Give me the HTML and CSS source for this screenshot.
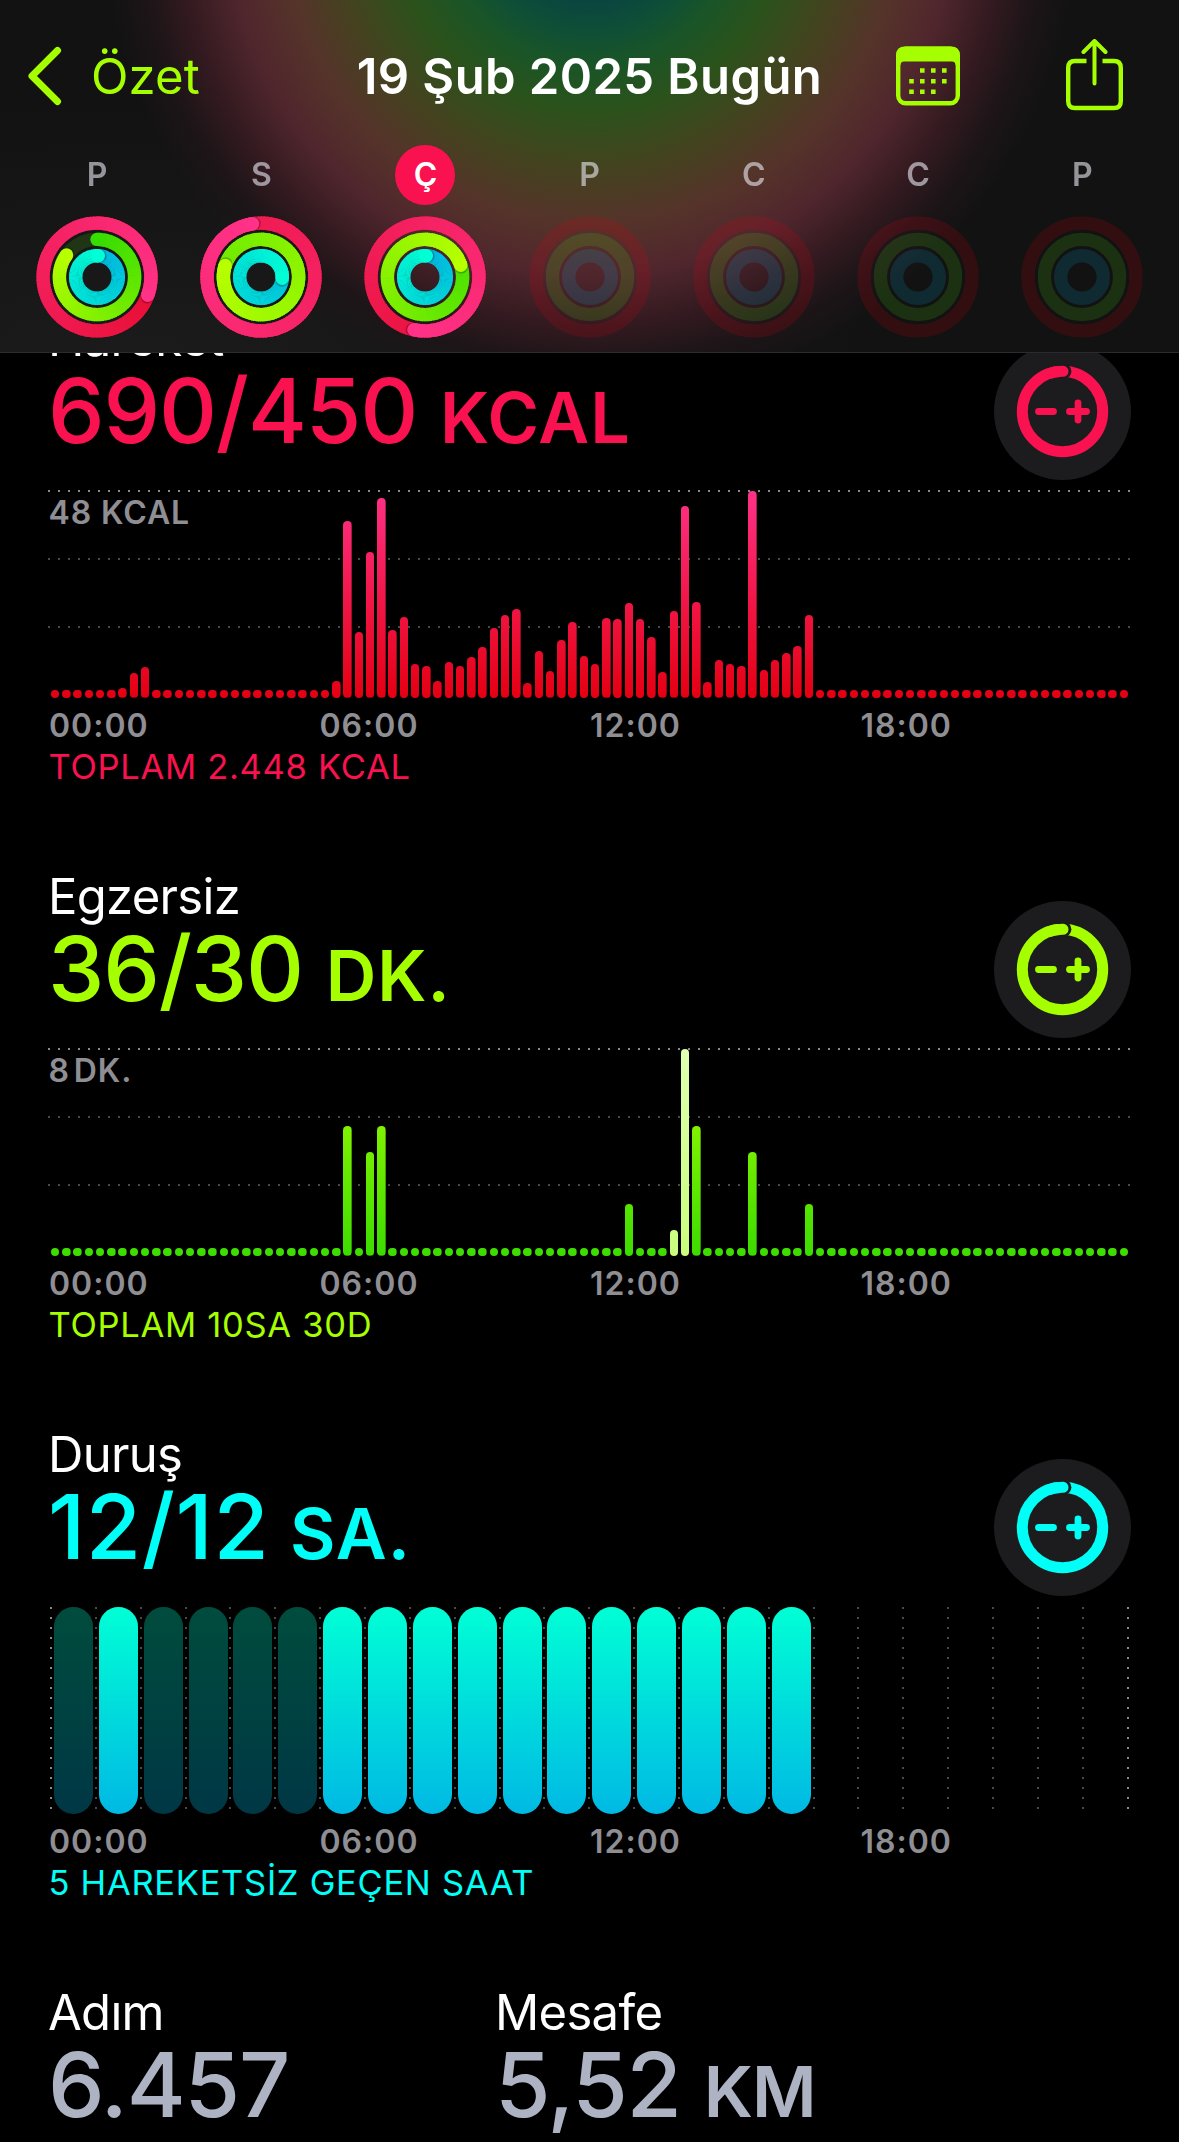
FILE: index.html
```html
<!DOCTYPE html>
<html lang="tr">
<head>
    <meta charset="UTF-8">
    <meta name="viewport" content="width=device-width, initial-scale=1.0">
    <title>Özet</title>
    <link rel="stylesheet" href="styles.css">
</head>
<body>
    <header class="header">
        <nav class="nav">
            <a class="back">
                <svg width="34" height="60" viewBox="0 0 34 60">
                    <path d="M29.5 4.5 L4 30 L29.5 55.5" />
                </svg>
                <span>Özet</span>
            </a>
            <h1 class="title">19 Şub 2025 Bugün</h1>
            <div class="actions">
                <svg class="calendar" width="64" height="60" viewBox="0 0 64 60">
                    <rect x="2.2" y="2.7" width="59.6" height="54.6" rx="7.5" fill="none" stroke="#a6ff00" stroke-width="4.4" />
                    <path d="M0 17 V9.500 Q0 .5 9 .5 H55 Q64 .5 64 9.500 V17 L59.500 19 Q59.500 15.500 56 15.500 H8 Q4.500 15.500 4.500 19 Z" />
                    <g class="calendar-dots">
                        <path d="M24 22.200h4.600v4.600h-4.600zM35 22.200h4.600v4.600h-4.600zM46 22.200h4.600v4.600h-4.600z" />
                        <path d="M13.200 32.900h4.600v4.600h-4.600zM24 32.900h4.600v4.600h-4.600zM35 32.900h4.600v4.600h-4.600zM46 32.900h4.600v4.600h-4.600z" />
                        <path d="M13.200 43.500h4.600v4.600h-4.600zM24 43.500h4.600v4.600h-4.600zM35 43.500h4.600v4.600h-4.600z" />
                    </g>
                </svg>
                <svg class="share" width="57" height="74" viewBox="0 0 57 74">
                    <path d="M20.500 22 H9 Q2.200 22 2.200 28.800 V62.200 Q2.200 69 9 69 H48 Q54.800 69 54.800 62.200 V28.800 Q54.800 22 48 22 H36.500" />
                    <path class="arrow" d="M28.500 44.500 V2.500 M17.500 13 L28.500 2 L39.500 13" />
                </svg>
            </div>
        </nav>
        <div class="week" id="week"></div>
    </header>

    <main>
        <section class="metric move">
            <div class="metric-head">
                <div>
                    <h2>Hareket</h2>
                    <p class="value">690/450 <small>KCAL</small></p>
                </div>
                <button class="goal-btn"></button>
            </div>
            <div class="chart" id="moveChart"><span class="max">48 KCAL</span></div>
            <div class="axis"><span>00:00</span><span>06:00</span><span>12:00</span><span>18:00</span></div>
            <p class="total">TOPLAM 2.448 KCAL</p>
        </section>

        <section class="metric exercise">
            <div class="metric-head">
                <div>
                    <h2>Egzersiz</h2>
                    <p class="value">36/30 <small>DK.</small></p>
                </div>
                <button class="goal-btn"></button>
            </div>
            <div class="chart" id="exerciseChart"><span class="max max-tight">8 DK.</span></div>
            <div class="axis"><span>00:00</span><span>06:00</span><span>12:00</span><span>18:00</span></div>
            <p class="total">TOPLAM 10SA 30D</p>
        </section>

        <section class="metric stand">
            <div class="metric-head">
                <div>
                    <h2>Duruş</h2>
                    <p class="value">12/12 <small>SA.</small></p>
                </div>
                <button class="goal-btn"></button>
            </div>
            <div class="hours" id="standChart"></div>
            <div class="axis"><span>00:00</span><span>06:00</span><span>12:00</span><span>18:00</span></div>
            <p class="total">5 HAREKETSİZ GEÇEN SAAT</p>
        </section>

        <section class="metric summary">
            <div>
                <h2>Adım</h2>
                <p class="value">6.457</p>
            </div>
            <div>
                <h2>Mesafe</h2>
                <p class="value">5,52 <small>KM</small></p>
            </div>
        </section>
    </main>

    <script src="script.js"></script>
</body>
</html>
```
FILE: styles.css
```css
* {
    box-sizing: border-box;
}

body {
    margin: 0;
    background-color: #000;
    color: #fff;
    font-family: Inter, "Liberation Sans", sans-serif;
    overflow: hidden;
}

h1, h2, p {
    margin: 0;
    font-weight: 400;
}

/* Header */
.header {
    position: fixed;
    top: 0;
    left: 0;
    z-index: 2;
    width: 100%;
    height: 353px;
    border-bottom: 1px solid #2b2b2d;
    background:
        radial-gradient(circle at 590px -87px,
            #0a463f 90px, #0f4f36 120px, #195528 150px, #2b521b 197px,
            #44431f 255px, #55332a 310px, #50262d 362px, #331a20 412px,
            #1d1518 450px, rgba(19, 19, 19, 0) 490px),
        radial-gradient(ellipse at 12% 100%, #1b1b1b, #121212 50%);
}

.nav {
    display: grid;
    grid-template-columns: 1fr auto 1fr;
    align-items: center;
    height: 145px;
    padding: 7px 28px 0;
}

.back {
    display: flex;
    align-items: center;
    gap: 29px;
    color: #a6ff00;
    font-size: 49px;
    letter-spacing: 0.1px;
}

.back path {
    fill: none;
    stroke: #a6ff00;
    stroke-width: 7;
    stroke-linecap: round;
    stroke-linejoin: round;
}

.title {
    font-size: 49px;
    font-weight: 600;
    letter-spacing: 0.4px;
    white-space: nowrap;
}

.actions {
    display: flex;
    justify-content: flex-end;
    align-items: center;
    gap: 106px;
    padding-right: 28px;
}

.calendar path {
    fill: #a6ff00;
}

.share path {
    fill: none;
    stroke: #a6ff00;
    stroke-width: 4.4;
    stroke-linecap: butt;
}

.share .arrow {
    stroke-width: 4;
    stroke-linecap: round;
    stroke-linejoin: round;
}

.week {
    display: grid;
    grid-template-columns: repeat(7, 164.2px);
    padding-left: 15px;
}

.day {
    display: flex;
    flex-direction: column;
    align-items: center;
    gap: 11px;
}

.day-name {
    width: 60px;
    height: 60px;
    border-radius: 50%;
    color: rgba(235, 235, 245, 0.6);
    font-size: 32px;
    font-weight: 600;
    line-height: 60px;
    text-align: center;
}

.day.today .day-name {
    background-color: #fa114f;
    color: #fff;
}

/* Metrics */
main {
    padding: 310px 48px 0 49px;
}

.metric {
    height: 558px;
}

.metric-head {
    display: flex;
    justify-content: space-between;
    align-items: flex-start;
    height: 171px;
    margin-bottom: 9px;
}

h2 {
    margin-left: -1px;
    font-size: 49px;
    line-height: 58px;
    letter-spacing: -0.7px;
}

.value {
    margin-left: -1px;
    font-size: 90px;
    font-weight: 500;
    line-height: 86px;
    letter-spacing: -1.2px;
    white-space: nowrap;
}

.value small {
    font-size: 70px;
    font-weight: 600;
    letter-spacing: 1px;
}

.stand .value {
    letter-spacing: 0.5px;
    word-spacing: -4px;
}

.summary .value small {
    letter-spacing: -1px;
}

.move { color: #fa114f; }
.exercise { color: #a6ff00; }
.stand { color: #00fff6; }
.summary { color: #adb3c2; }

.metric h2 {
    color: #fff;
}

.goal-btn {
    width: 137px;
    height: 137px;
    margin-top: 33px;
    padding: 0;
    border: none;
    border-radius: 50%;
    background-color: #1c1c1e;
    color: inherit;
}

.goal-btn svg {
    display: block;
}

.chart {
    display: grid;
    grid-template-columns: repeat(96, 11.25px);
    align-items: end;
    justify-items: center;
    position: relative;
    width: 1080px;
    height: 208px;
    padding-left: 0.5px;
}

/* dotted grid lines, 10px step */
.chart::before {
    content: "";
    position: absolute;
    left: -1px;
    top: 0;
    width: 1082px;
    height: 138px;
    background:
        repeating-linear-gradient(90deg, #8a8a8a 0 2px, transparent 2px 10px) 0 0 / 100% 2px no-repeat,
        repeating-linear-gradient(90deg, #4a4a4a 0 2px, transparent 2px 10px) 0 68px / 100% 2px no-repeat,
        repeating-linear-gradient(90deg, #4a4a4a 0 2px, transparent 2px 10px) 0 136px / 100% 2px no-repeat;
}

.chart .max {
    position: absolute;
    left: -0.5px;
    top: 3px;
    color: #8e8e93;
    font-size: 32px;
    font-weight: 600;
    line-height: 40px;
    letter-spacing: 0.9px;
    white-space: nowrap;
}

.chart .max-tight {
    word-spacing: -5px;
}

.bar {
    position: relative;
    width: 8.3px;
    border-radius: 4.2px;
    background: linear-gradient(to top, #e40012, #f01545 45%, #ff3288) bottom / 100% 207px no-repeat;
}

.exercise .bar {
    background-image: linear-gradient(to top, #3cdc00, #a8ff00);
}

.exercise .bar.workout {
    background-image: linear-gradient(to top, #caff7c, #dfffb2);
}

.hours {
    display: flex;
    align-items: flex-end;
    width: 1080px;
    height: 208px;
    padding-left: 1px;
}

.hour {
    flex: none;
    width: 44.87px;
    height: 207px;
    padding-left: 4px;
    background: repeating-linear-gradient(#4a4a4a 0 2px, transparent 2px 10px) 0 0 / 2px 202px no-repeat;
}

.hour:first-child,
.hour:last-child {
    background-image: repeating-linear-gradient(#8a8a8a 0 2px, transparent 2px 10px);
}

.hour i {
    display: block;
    width: 39px;
    height: 207px;
    border-radius: 19.5px;
}

.hour .stood {
    background: linear-gradient(#00ffd5, #00b9e4);
}

.hour .idle {
    background: linear-gradient(#004c3d, #003745);
}

.axis {
    display: grid;
    grid-template-columns: repeat(4, 270.5px);
    margin: 8px 0 0;
    color: #8e8e93;
    font-size: 32px;
    font-weight: 600;
    line-height: 40px;
    letter-spacing: 1px;
}

.total {
    margin-left: -0.5px;
    font-size: 34.5px;
    line-height: 42px;
    letter-spacing: 0.7px;
}

.summary {
    display: grid;
    grid-template-columns: 447px 1fr;
    height: 150px;
}
```
FILE: script.js
```js
const SVG_NS = 'http://www.w3.org/2000/svg';

// Halka renkleri: [başlangıç, bitiş]
const RINGS = [
    { radius: 53.9, from: [225, 5, 30], to: [255, 50, 136], track: 'rgba(220, 0, 20, 0.17)' },
    { radius: 37.6, from: [55, 220, 0], to: [184, 255, 0], track: 'rgba(80, 225, 20, 0.15)' },
    { radius: 21.3, from: [0, 184, 226], to: [0, 255, 212], track: 'rgba(0, 180, 230, 0.15)' }
];
const RING_WIDTH = 13.4;

const DAYS = [
    { name: 'P', rings: [1.305, 0.85, 1.01] },
    { name: 'S', rings: [1.975, 1.8, 1.26] },
    { name: 'Ç', rings: [1.533, 1.2, 1.01], today: true },
    { name: 'P' },
    { name: 'C' },
    { name: 'C' },
    { name: 'P' }
];

// 15 dakikalık dilimler: yükseklikler piksel
const MOVE = {
    6: 9.7, 7: 24.7, 8: 30.7, 25: 17.3, 26: 176.7, 27: 66.3, 28: 145.7, 29: 199.7, 30: 68.3, 31: 81,
    32: 34, 33: 32, 34: 17.3, 35: 36.3, 36: 31.7, 37: 40.7, 38: 51, 39: 70.3, 40: 82.7, 41: 89,
    42: 14.7, 43: 47, 44: 26.7, 45: 58.3, 46: 76.3, 47: 42, 48: 34.3, 49: 79.7, 50: 79, 51: 95,
    52: 79.3, 53: 61.3, 54: 25.7, 55: 86.7, 56: 191.7, 57: 96, 58: 15.7, 59: 37.7, 60: 33.7,
    61: 32.3, 62: 207, 63: 27.7, 64: 37.7, 65: 44.7, 66: 52, 67: 83
};
const EXERCISE = { 26: 129.7, 28: 103.7, 29: 129.7, 51: 52, 55: 26.3, 56: 207, 57: 129.7, 62: 103.7, 67: 52 };
const WORKOUT = [55, 56];
const STOOD = [1, 6, 7, 8, 9, 10, 11, 12, 13, 14, 15, 16];

function svgEl(name, attrs, parent) {
    const el = document.createElementNS(SVG_NS, name);
    for (const key in attrs) el.setAttribute(key, attrs[key]);
    parent.appendChild(el);
    return el;
}

function point(radius, turn, size) {
    const a = turn * Math.PI * 2 - Math.PI / 2;
    return [size / 2 + radius * Math.cos(a), size / 2 + radius * Math.sin(a)];
}

function drawRing(svg, ring, amount, size) {
    const c = size / 2;
    svgEl('circle', { cx: c, cy: c, r: ring.radius, fill: 'none', stroke: ring.track, 'stroke-width': RING_WIDTH }, svg);
    if (!amount) return;

    const color = t => 'rgb(' + ring.from.map((v, i) => Math.round(v + (ring.to[i] - v) * t)).join(',') + ')';
    const [sx, sy] = point(ring.radius, 0, size);
    svgEl('circle', { cx: sx, cy: sy, r: RING_WIDTH / 2, fill: color(0) }, svg);

    const cap = () => {
        const [hx, hy] = point(ring.radius, amount + 1.6 / (ring.radius * 6.28), size);
        svgEl('circle', { cx: hx, cy: hy, r: RING_WIDTH / 2, fill: 'rgba(0, 0, 0, 0.25)' }, svg);
    };
    const steps = Math.round(amount * 120);
    for (let i = 0; i < steps; i++) {
        const a = amount * i / steps;
        const b = Math.min(amount * (i + 1) / steps + 0.003, amount);
        if (i === steps - 8) cap();
        const [x1, y1] = point(ring.radius, a, size);
        const [x2, y2] = point(ring.radius, b, size);
        svgEl('path', {
            d: `M${x1} ${y1} A${ring.radius} ${ring.radius} 0 0 1 ${x2} ${y2}`,
            fill: 'none', stroke: color(i / steps), 'stroke-width': RING_WIDTH
        }, svg);
    }
    const [ex, ey] = point(ring.radius, amount, size);
    svgEl('circle', { cx: ex, cy: ey, r: RING_WIDTH / 2, fill: color(1) }, svg);
}

function drawWeek() {
    const week = document.getElementById('week');
    DAYS.forEach(day => {
        const el = document.createElement('div');
        el.className = day.today ? 'day today' : 'day';
        el.innerHTML = `<span class="day-name">${day.name}</span>`;
        const svg = svgEl('svg', { width: 122, height: 122, viewBox: '0 0 122 122' }, el);
        RINGS.forEach((ring, i) => drawRing(svg, ring, day.rings ? day.rings[i] : 0, 122));
        week.appendChild(el);
    });
}

function drawBars(id, data, workout) {
    const chart = document.getElementById(id);
    for (let i = 0; i < 96; i++) {
        const bar = document.createElement('div');
        bar.className = workout.includes(i) ? 'bar workout' : 'bar';
        bar.style.height = (data[i] || 8.3) + 'px';
        chart.appendChild(bar);
    }
}

function drawHours() {
    const chart = document.getElementById('standChart');
    for (let i = 0; i <= 24; i++) {
        const hour = document.createElement('div');
        hour.className = 'hour';
        if (i <= 16) hour.innerHTML = `<i class="${STOOD.includes(i) ? 'stood' : 'idle'}"></i>`;
        chart.appendChild(hour);
    }
}

function drawGoalButtons() {
    document.querySelectorAll('.goal-btn').forEach(btn => {
        btn.innerHTML = `
            <svg width="137" height="137" viewBox="0 0 137 137" fill="none" stroke="currentColor" stroke-linecap="round">
                <circle cx="68.500" cy="68.500" r="40.200" stroke-width="11" />
                <circle cx="70" cy="28.300" r="7.400" fill="#1c1c1e" stroke="none" />
                <path d="M55 30.600 A40.200 40.200 0 0 1 69 28.300" stroke-width="11" />
                <path d="M44.500 68.500 H59.500 M75.500 68.500 H92.500 M84 60 V77" stroke-width="6.800" />
            </svg>`;
    });
}

drawWeek();
drawBars('moveChart', MOVE, []);
drawBars('exerciseChart', EXERCISE, WORKOUT);
drawHours();
drawGoalButtons();
```
